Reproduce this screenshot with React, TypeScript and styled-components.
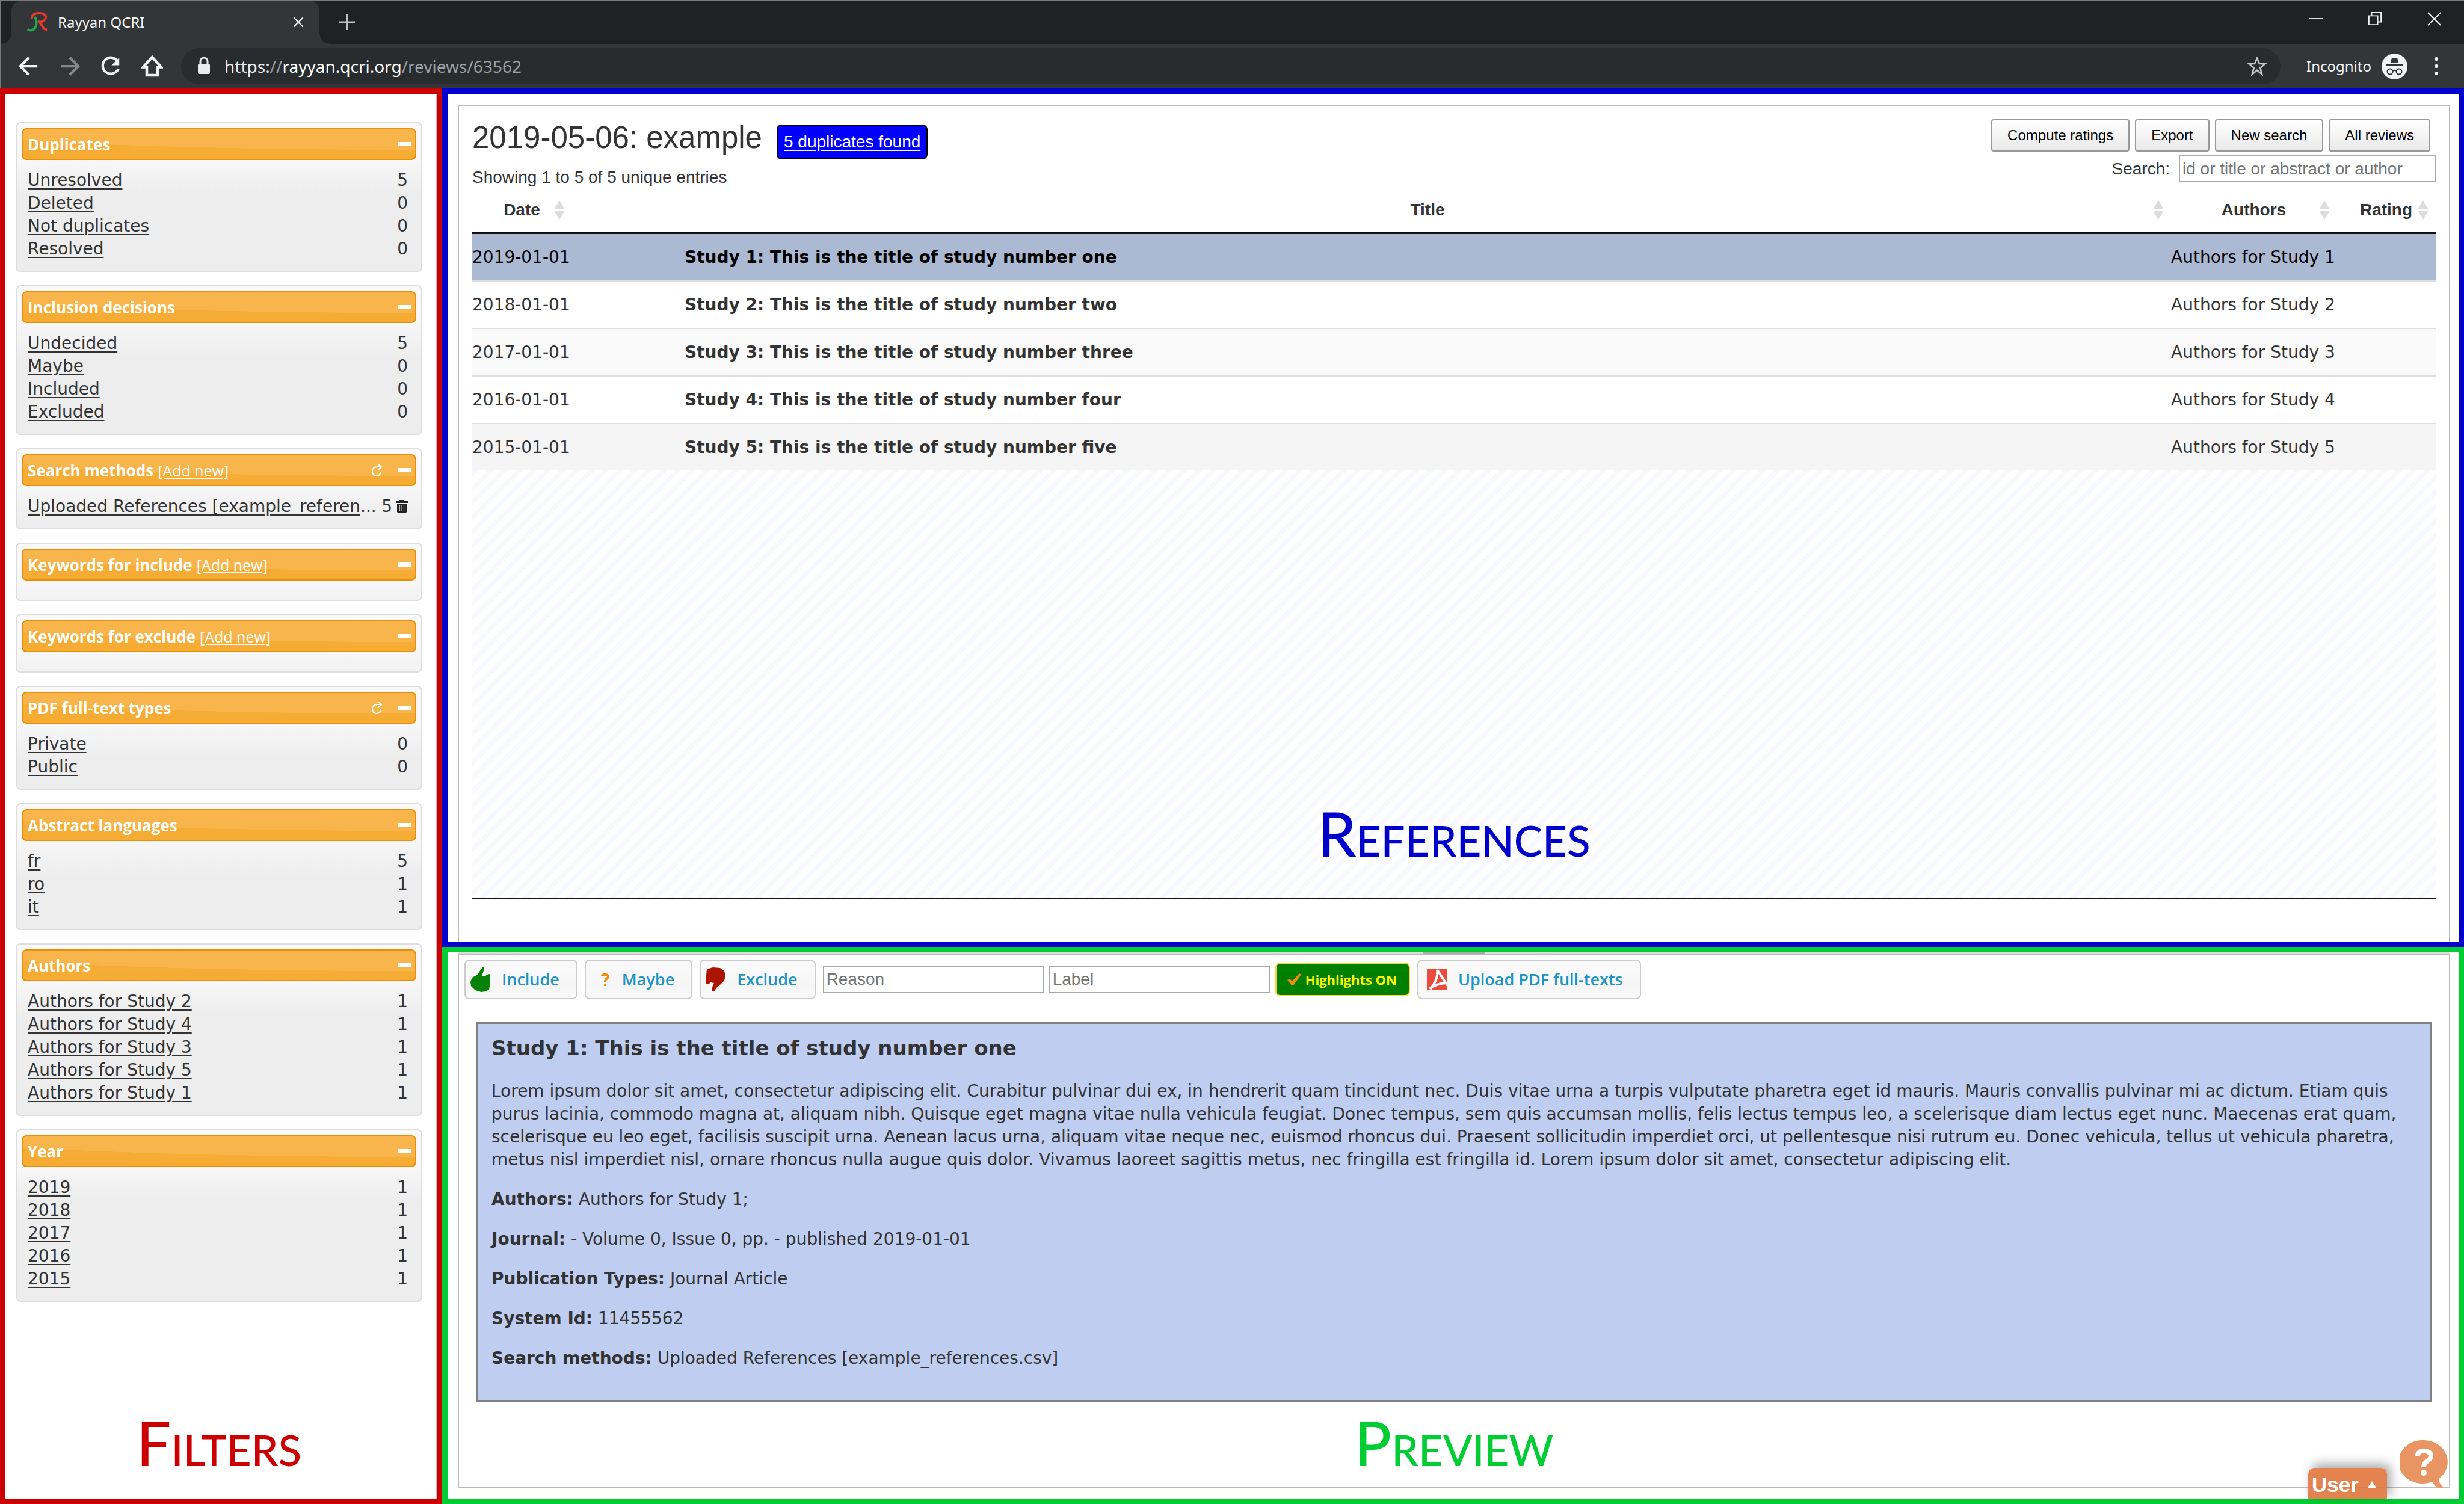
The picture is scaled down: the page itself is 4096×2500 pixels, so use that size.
import React from "react";
import styled, { createGlobalStyle, css } from "styled-components";

const verdana = '"DejaVu Sans", Verdana, sans-serif';
const arial = '"Liberation Sans", Arial, sans-serif';
const segoe = '"Noto Sans", "Segoe UI", sans-serif';
const trebuchet = '"Open Sans", "Trebuchet MS", sans-serif';

const GlobalStyle = createGlobalStyle`
  *, *::before, *::after { box-sizing: border-box; }
  body { margin: 0; background: #fff; color: #333; font: 28px/38px ${verdana}; }
  h1, h2, h3, p, ul { margin: 0; padding: 0; }
  ul { list-style: none; }
  button { margin: 0; cursor: pointer; }
  svg { display: block; flex: none; }
`;

const Page = styled.div`
  display: flex;
  flex-direction: column;
  min-height: 100vh;
`;

/* ---------- browser window ---------- */

const Chrome = styled.header`
  flex: none;
  font-family: ${segoe};
  color: #f1f3f4;
  border-top: 1px solid #77797b;
  border-left: 1px solid #77797b;
`;

const TabStrip = styled.div`
  display: flex;
  align-items: stretch;
  height: 72px;
  padding-left: 18px;
  background: #202124;
`;

const Tab = styled.div`
  position: relative;
  display: flex;
  align-items: center;
  width: 512px;
  padding: 0 26px;
  border-radius: 17px 17px 0 0;
  background: #323639;
  font-size: 24px;
  line-height: 34px;

  &::before, &::after {
    content: "";
    position: absolute;
    bottom: 0;
    width: 17px;
    height: 17px;
  }
  &::before {
    right: 100%;
    background: radial-gradient(circle at 0 0, transparent 16px, #323639 17px);
  }
  &::after {
    left: 100%;
    background: radial-gradient(circle at 100% 0, transparent 16px, #323639 17px);
  }
`;

const TabTitle = styled.span`
  flex: 1;
  padding-left: 17px;
`;

const IconButton = styled.button<{ $dim?: boolean }>`
  display: flex;
  align-items: center;
  justify-content: center;
  padding: 0;
  border: 0;
  background: none;
  color: ${(p) => (p.$dim ? "#85888a" : "inherit")};
`;

const NewTab = styled(IconButton)`
  width: 50px;
  margin-left: 21px;
  color: #bdc1c6;
`;

const WindowControls = styled.div`
  display: flex;
  align-items: center;
  gap: 76px;
  height: 60px;
  margin-left: auto;
  padding-right: 38px;
`;

const Toolbar = styled.div`
  display: flex;
  align-items: center;
  height: 74px;
  padding: 0 38px 0 30px;
  background: #323639;
`;

const NavButtons = styled.div`
  display: flex;
  gap: 34px;
  width: 270px;
`;

const Omnibox = styled.div`
  display: flex;
  flex: 1;
  align-items: center;
  height: 60px;
  padding: 0 23px 0 28px;
  border-radius: 30px;
  background: #282c2f;
  font-size: 28px;
  line-height: 40px;
`;

const Url = styled.span`
  flex: 1;
  padding-left: 24px;
  color: #9aa0a6;

  b { font-weight: 400; color: #fff; }
  i { font-style: normal; color: #e8eaed; }
`;

const Profile = styled.div`
  display: flex;
  align-items: center;
  gap: 17px;
  padding: 0 40px 0 43px;
  font-size: 24px;
  line-height: 34px;
`;

/* ---------- page frame ---------- */

const Workspace = styled.main`
  display: grid;
  flex: 1;
  grid-template-columns: 735px minmax(0, 1fr);
  grid-template-rows: minmax(0, 1427fr) minmax(0, 926fr);
`;

const Annotation = styled.div<{ $color: string }>`
  color: ${(p) => p.$color};
  font: 500 102px/100px Lato, sans-serif;
  font-variant: small-caps;
  text-align: center;
`;

/* ---------- filters ---------- */

const Sidebar = styled.aside`
  display: flex;
  flex-direction: column;
  grid-row: 1 / 3;
  gap: 22px;
  padding: 47px 24px 43px 17px;
  border: 9px solid #c00;
  box-shadow: inset -2px 0 #bbb;

  ${Annotation} { margin-top: auto; }
`;

const Panel = styled.section`
  padding: 8px;
  border: 2px solid #ddd;
  border-radius: 8px;
  background: linear-gradient(#f9f9f9 0, #f7f7f7 60px, #ededed 120px);
`;

const PanelHeader = styled.div`
  display: flex;
  align-items: center;
  height: 53px;
  padding: 0 7px 0 8px;
  border: 2px solid #e78f08;
  border-radius: 8px;
  background: radial-gradient(ellipse 130% 90% at 100% -20%, #f7b54c 99%, transparent 100%),
    linear-gradient(#f6af3b, #f6ab32);
  color: #fff;
  font-family: ${trebuchet};
`;

const PanelTitle = styled.h3`
  font-size: 26px;
  font-weight: 700;
  line-height: 40px;
`;

const HeaderLink = styled.a`
  margin-left: 7px;
  color: #fff;
  font-size: 25px;
  line-height: 40px;
`;

const HeaderTools = styled.div`
  display: flex;
  align-items: center;
  gap: 25px;
  margin-left: auto;
`;

const FilterList = styled.ul`
  padding: 15px 14px 9px 10px;
`;

const FilterRow = styled.li`
  display: flex;
  align-items: center;
  height: 38px;
  white-space: nowrap;
`;

const FilterLink = styled.a`
  color: #333;
  text-underline-offset: 4px;
`;

const Count = styled.span`
  margin-left: auto;
`;

const TrashButton = styled(IconButton)`
  margin-left: 6px;
  color: #222;
`;

/* ---------- references ---------- */

const References = styled.section`
  display: flex;
  flex-direction: column;
  padding: 19px 14px 0 17px;
  border: 9px solid #00c;
  border-bottom-width: 8px;
`;

const ReferencesFrame = styled.div`
  display: flex;
  flex: 1;
  flex-direction: column;
  padding: 21px 22px 71px 22px;
  border: 2px solid #bbb;
  border-bottom: 0;
`;

const ReviewBar = styled.div`
  display: flex;
  justify-content: space-between;
  font-family: ${arial};
`;

const TitleRow = styled.div`
  display: flex;
  align-items: flex-end;
  gap: 24px;
  height: 67px;
  margin-bottom: 13px;
`;

const ReviewTitle = styled.h1`
  align-self: flex-start;
  font-size: 51px;
  font-weight: 400;
  line-height: 62px;
`;

const DuplicatesBadge = styled.a`
  height: 58px;
  padding: 0 10px;
  border: 2px solid #000;
  border-radius: 8px;
  background: #00f;
  color: #fff;
  line-height: 54px;
  text-underline-offset: 4px;
`;

const Summary = styled.p`
  line-height: 34px;
`;

const Actions = styled.div`
  display: flex;
  flex-direction: column;
  align-items: flex-end;
  gap: 6px;
`;

const ButtonRow = styled.div`
  display: flex;
  gap: 9px;
  padding-right: 9px;
`;

const ActionButton = styled.button`
  height: 54px;
  padding: 0 25px;
  border: 2px solid #999;
  border-radius: 4px;
  background: linear-gradient(#fff, #e9e9e9);
  color: #000;
  font: 24px/34px ${arial};
`;

const SearchField = styled.label`
  display: flex;
  align-items: center;
  gap: 15px;
`;

const TextInput = styled.input<{ $width: number }>`
  width: ${(p) => p.$width}px;
  height: 45px;
  padding: 0 4px;
  border: 2px solid #a9a9a9;
  border-radius: 0;
  background: #fff;
  color: #333;
  font: 28px/36px ${arial};

  &::placeholder { color: #757575; opacity: 1; }
`;

const StudyTable = styled.table`
  width: 100%;
  border-spacing: 0;
  table-layout: fixed;
`;

const HeadCell = styled.th<{ $width?: number }>`
  width: ${(p) => (p.$width ? `${p.$width}px` : "auto")};
  height: 77px;
  padding: 0;
  border-bottom: 3px solid #111;
  font: 700 28px/34px ${arial};
`;

const SortButton = styled.button`
  display: flex;
  align-items: center;
  width: 100%;
  padding: 0 12px 0 29px;
  border: 0;
  background: none;
  color: inherit;
  font: inherit;

  span { flex: 1; }
`;

const StudyRow = styled.tr<{ $tone: string; $selected?: boolean }>`
  background: ${(p) => p.$tone};
  color: ${(p) => (p.$selected ? "#000" : "#333")};

  td {
    height: 79px;
    padding: 0;
    border-top: 2px solid #ddd;
    white-space: nowrap;
  }
  ${(p) =>
    p.$selected &&
    css`
      td { height: 77px; border-top: 0; }
    `}
`;

const StudyTitle = styled.td`
  font-weight: 700;
`;

const Scroller = styled.div`
  display: flex;
  flex: 1;
  align-items: flex-end;
  justify-content: center;
  padding-bottom: 58px;
  border-bottom: 2px solid #111;
  background: repeating-linear-gradient(135deg, #f8f9ff 0, #f8f9ff 8px, #fff 8px, #fff 17px);
`;

/* ---------- preview ---------- */

const Preview = styled.section`
  position: relative;
  display: flex;
  flex-direction: column;
  padding: 0 14px 18px 17px;
  border: 9px solid #00cd33;
`;

const Resizer = styled.div`
  height: 2px;
  background: #ddd;

  &::before {
    content: "";
    display: block;
    width: 104px;
    height: 2px;
    margin: 0 auto;
    background: #aaa;
  }
`;

const PreviewFrame = styled.div`
  display: flex;
  flex: 1;
  flex-direction: column;
  justify-content: space-between;
  padding: 8px 28px 23px;
  border: 2px solid #bbb;
`;

const DecisionBar = styled.div`
  display: flex;
  align-items: center;
  gap: 12px;
  margin: 0 0 37px -19px;
`;

const Fields = styled.div`
  display: flex;
  align-items: center;
  gap: 8px;
`;

const DecisionButton = styled.button<{ $inset?: boolean }>`
  display: flex;
  align-items: center;
  gap: 18px;
  height: 66px;
  padding: 0 28px 0 ${(p) => (p.$inset ? "14px" : "8px")};
  border: 2px solid #ccc;
  border-radius: 8px;
  background: linear-gradient(#fafafa, #f6f6f6 70%, #fafafa);
  color: #1c94c4;
  font: 600 27px/36px ${trebuchet};
`;

const HighlightButton = styled.button`
  display: flex;
  align-items: center;
  gap: 7px;
  height: 56px;
  padding: 0 20px 0 18px;
  border: 2px solid #fed22f;
  border-radius: 8px;
  background: green;
  color: #ff0;
  font: 700 22px/32px ${trebuchet};
`;

const Article = styled.article`
  padding: 18px 22px 50px;
  border: 4px solid #808080;
  background: #becdf0;
`;

const ArticleTitle = styled.h2`
  margin-bottom: 31px;
  font-size: 34px;
  font-weight: 700;
  line-height: 44px;
`;

const Paragraph = styled.p`
  & + & { margin-top: 28px; }
`;

const UserTab = styled.button`
  position: absolute;
  right: 119px;
  bottom: 0;
  display: flex;
  align-items: center;
  justify-content: space-between;
  width: 131px;
  height: 51px;
  padding: 4px 17px 0 6px;
  border: 0;
  border-radius: 10px 10px 0 0;
  background: rgba(224, 117, 60, 0.9);
  box-shadow: 6px -6px 18px rgba(0, 0, 0, 0.35);
  color: #fff;
  font: 700 35px/42px ${arial};
`;

const HelpBubble = styled.button`
  position: absolute;
  right: 18px;
  bottom: 17px;
  padding: 0;
  border: 0;
  background: none;
`;

/* ---------- icons ---------- */

type StrokeProps = { size: number; width: number; children: React.ReactNode };

const Stroke = ({ size, width, children }: StrokeProps) => (
  <svg width={size} height={size} viewBox="0 0 24 24" fill="none" stroke="currentColor" strokeWidth={width} aria-hidden>
    {children}
  </svg>
);

const Favicon = () => (
  <svg width="34" height="34" viewBox="0 0 34 34" fill="none" strokeWidth="4" aria-hidden>
    <path d="M8 11C7 4 14 2 20 2c10 0 13 5 10 10-2 4-7 5-11 4 6 2 6 14 14 13" stroke="#e8382b" />
    <path d="M13 8c4 6 3 16-1 20-3 3-8 3-11 1" stroke="#1fa84a" />
  </svg>
);

const SortIcon = () => (
  <svg width="18" height="32" viewBox="0 0 18 32" fill="#dcdcdc" aria-hidden>
    <path d="M9 0l9 15H0zM9 32l9-15H0z" />
  </svg>
);

const MinusIcon = () => (
  <svg width="22" height="7" viewBox="0 0 22 7" fill="#fff" aria-hidden>
    <path d="M0 0h22v7H0z" />
  </svg>
);

const RefreshIcon = () => (
  <svg width="18" height="20" viewBox="0 0 18 20" fill="none" stroke="#fff" strokeWidth="2" aria-hidden>
    <path d="M9 4C4 4 1 7 1 11.500S4 19 8 19s7-3 7-7M8 4h8M11 0l5 4-5 5" />
  </svg>
);

const TrashIcon = () => (
  <svg width="20" height="22" viewBox="0 0 20 22" aria-hidden>
    <path d="M6 0h8v2h6v3H0V2h6z" fill="currentColor" />
    <path d="M2 7h16v13l-2 2H4l-2-2z" fill="currentColor" />
    <path d="M6.500 9v10M10 9v10M13.500 9v10" stroke="#bbb" strokeWidth="1.200" />
  </svg>
);

const IncognitoIcon = () => (
  <svg width="43" height="43" viewBox="0 0 43 43" aria-hidden>
    <circle cx="21.500" cy="21.500" r="21.500" fill="#f1f3f4" />
    <path d="M15 15l2-8 4.500 1L26 7l2 8zM7 18h29v2.500H7z" fill="#323639" />
    <g fill="none" stroke="#323639" strokeWidth="2">
      <circle cx="14" cy="30" r="4.500" />
      <circle cx="29" cy="30" r="4.500" />
      <path d="M18.500 29c2-1.500 4-1.500 6 0" />
    </g>
  </svg>
);

const ThumbUp = () => (
  <svg width="34" height="42" viewBox="0 0 34 42" fill="#058205" aria-hidden>
    <path d="M21 0l2 3-4 13 6-1 5-3 3 1-1 7 1 5-2 13-6 3-7 1-10-3-7-7-1-7 3-7 9-5 5-8z" />
  </svg>
);

const ThumbDown = () => (
  <svg width="34" height="42" viewBox="0 0 34 42" fill="#ab1500" aria-hidden>
    <path d="M2 4l10-3 12 1 7 5 2 8-2 8-6 6-6 5-5 7h-4v-5l4-9-6-1-3 3-4-1V14z" />
  </svg>
);

const QuestionIcon = () => (
  <svg width="34" height="42" viewBox="0 0 34 42" fill="none" stroke="#ef8c08" strokeWidth="4" aria-hidden>
    <path d="M19 15c0-3 10-3 10 1 0 4-5 3-5 9M24 28v4" />
  </svg>
);

const CheckIcon = () => (
  <svg width="23" height="20" viewBox="0 0 23 20" fill="#ef8c08" aria-hidden>
    <path d="M0 11l4-2 4 4L20 0l3 2L10 20H7z" />
  </svg>
);

const PdfIcon = () => (
  <svg width="34" height="34" viewBox="0 0 34 34" aria-hidden>
    <path d="M0 0h34v34H0z" fill="#eb4b3c" />
    <path d="M17 1l17 26M17 1c2 12-3 22-11 32M4 32C12 27 24 23 34 23" fill="none" stroke="#fff" strokeWidth="4" />
  </svg>
);

const BubbleIcon = () => (
  <svg width="80" height="80" viewBox="0 0 80 80" aria-hidden>
    <path d="M40 0a40 36 0 0 1 25 64c0 6 3 10 8 14-7 4-14 0-19-9A40 36 0 1 1 40 0z" fill="#e99563" />
    <path d="M30 26c-1-11 22-11 22 0 0 9-12 8-12 19" fill="none" stroke="#fff" strokeWidth="8" />
    <circle cx="40" cy="54" r="5" fill="#fff" />
  </svg>
);

/* ---------- content ---------- */

type Filter = { label: string; count: number; cut?: boolean; removable?: boolean };
type FilterGroup = { title: string; addNew?: boolean; refresh?: boolean; items: Filter[] };

const filterGroups: FilterGroup[] = [
  {
    title: "Duplicates",
    items: [
      { label: "Unresolved", count: 5 },
      { label: "Deleted", count: 0 },
      { label: "Not duplicates", count: 0 },
      { label: "Resolved", count: 0 },
    ],
  },
  {
    title: "Inclusion decisions",
    items: [
      { label: "Undecided", count: 5 },
      { label: "Maybe", count: 0 },
      { label: "Included", count: 0 },
      { label: "Excluded", count: 0 },
    ],
  },
  {
    title: "Search methods",
    addNew: true,
    refresh: true,
    items: [{ label: "Uploaded References [example_referen", count: 5, cut: true, removable: true }],
  },
  { title: "Keywords for include", addNew: true, items: [] },
  { title: "Keywords for exclude", addNew: true, items: [] },
  {
    title: "PDF full-text types",
    refresh: true,
    items: [
      { label: "Private", count: 0 },
      { label: "Public", count: 0 },
    ],
  },
  {
    title: "Abstract languages",
    items: [
      { label: "fr", count: 5 },
      { label: "ro", count: 1 },
      { label: "it", count: 1 },
    ],
  },
  { title: "Authors", items: [2, 4, 3, 5, 1].map((n) => ({ label: `Authors for Study ${n}`, count: 1 })) },
  { title: "Year", items: [2019, 2018, 2017, 2016, 2015].map((y) => ({ label: String(y), count: 1 })) },
];

const studies = [
  { n: 1, date: "2019-01-01", word: "one", tone: "#abb9d3" },
  { n: 2, date: "2018-01-01", word: "two", tone: "#fff" },
  { n: 3, date: "2017-01-01", word: "three", tone: "#f9f9f9" },
  { n: 4, date: "2016-01-01", word: "four", tone: "#fff" },
  { n: 5, date: "2015-01-01", word: "five", tone: "#f5f5f5" },
];

const details = [
  ["Authors:", "Authors for Study 1;"],
  ["Journal:", "- Volume 0, Issue 0, pp. - published 2019-01-01"],
  ["Publication Types:", "Journal Article"],
  ["System Id:", "11455562"],
  ["Search methods:", "Uploaded References [example_references.csv]"],
];

const abstractText =
  "Lorem ipsum dolor sit amet, consectetur adipiscing elit. Curabitur pulvinar dui ex, in hendrerit quam tincidunt nec. Duis vitae urna a turpis vulputate pharetra eget id mauris. Mauris convallis pulvinar mi ac dictum. Etiam quis purus lacinia, commodo magna at, aliquam nibh. Quisque eget magna vitae nulla vehicula feugiat. Donec tempus, sem quis accumsan mollis, felis lectus tempus leo, a scelerisque diam lectus eget nunc. Maecenas erat quam, scelerisque eu leo eget, facilisis suscipit urna. Aenean lacus urna, aliquam vitae neque nec, euismod rhoncus dui. Praesent sollicitudin imperdiet orci, ut pellentesque nisi rutrum eu. Donec vehicula, tellus ut vehicula pharetra, metus nisl imperdiet nisl, ornare rhoncus nulla augue quis dolor. Vivamus laoreet sagittis metus, nec fringilla est fringilla id. Lorem ipsum dolor sit amet, consectetur adipiscing elit.";

/* ---------- components ---------- */

const BrowserChrome = () => (
  <Chrome>
    <TabStrip>
      <Tab>
        <Favicon />
        <TabTitle>Rayyan QCRI</TabTitle>
        <IconButton aria-label="Close tab">
          <Stroke size={18} width={3}><path d="M2 2l20 20M22 2L2 22" /></Stroke>
        </IconButton>
      </Tab>
      <NewTab aria-label="New tab">
        <Stroke size={26} width={3}><path d="M12 0v24M0 12h24" /></Stroke>
      </NewTab>
      <WindowControls>
        <IconButton aria-label="Minimize">
          <Stroke size={22} width={2}><path d="M0 12h24" /></Stroke>
        </IconButton>
        <IconButton aria-label="Restore">
          <Stroke size={22} width={2}><path d="M1 7h16v16H1zM6 7V1h17v17h-6" /></Stroke>
        </IconButton>
        <IconButton aria-label="Close">
          <Stroke size={23} width={2}><path d="M1 1l22 22M23 1L1 23" /></Stroke>
        </IconButton>
      </WindowControls>
    </TabStrip>
    <Toolbar>
      <NavButtons>
        <IconButton aria-label="Back">
          <Stroke size={34} width={3}><path d="M22 12H3M12 2L2 12l10 10" /></Stroke>
        </IconButton>
        <IconButton aria-label="Forward" $dim>
          <Stroke size={34} width={3}><path d="M2 12h19M12 2l10 10-10 10" /></Stroke>
        </IconButton>
        <IconButton aria-label="Reload">
          <Stroke size={34} width={3}>
            <path d="M20 6A9.500 9.500 0 1 0 21 15" />
            <path d="M22 2v9h-9z" fill="currentColor" stroke="none" />
          </Stroke>
        </IconButton>
        <IconButton aria-label="Home">
          <Stroke size={36} width={3}><path d="M12 2L2 13h4v9h12v-9h4z" /></Stroke>
        </IconButton>
      </NavButtons>
      <Omnibox>
        <svg width="20" height="34" viewBox="0 0 20 34" aria-hidden>
          <path d="M4 14V9c0-8 12-8 12 0v5" fill="none" stroke="#e8eaed" strokeWidth="3" />
          <rect y="13" width="20" height="17" rx="2" fill="#e8eaed" />
        </svg>
        <Url><i>https:</i>//<b>rayyan.qcri.org</b>/reviews/63562</Url>
        <IconButton aria-label="Bookmark this page">
          <Stroke size={32} width={2}>
            <path d="M12 2l3 7h7l-6 5 2 8-6-5-6 5 2-8-6-5h7z" stroke="#c4c7ca" />
          </Stroke>
        </IconButton>
      </Omnibox>
      <Profile>Incognito<IncognitoIcon /></Profile>
      <IconButton aria-label="Menu">
        <svg width="16" height="32" viewBox="0 0 16 32" fill="#f1f3f4" aria-hidden>
          <circle cx="8" cy="4" r="3" />
          <circle cx="8" cy="16" r="3" />
          <circle cx="8" cy="28" r="3" />
        </svg>
      </IconButton>
    </Toolbar>
  </Chrome>
);

const FilterPanel = ({ title, addNew, refresh, items }: FilterGroup) => (
  <Panel>
    <PanelHeader>
      <PanelTitle>{title}</PanelTitle>
      {addNew && <HeaderLink href="#">[Add new]</HeaderLink>}
      <HeaderTools>
        {refresh && <IconButton aria-label={`Refresh ${title}`}><RefreshIcon /></IconButton>}
        <IconButton aria-label={`Collapse ${title}`}><MinusIcon /></IconButton>
      </HeaderTools>
    </PanelHeader>
    <FilterList>
      {items.map((item) => (
        <FilterRow key={item.label}>
          <FilterLink href="#">{item.label}</FilterLink>
          {item.cut && "..."}
          <Count>{item.count}</Count>
          {item.removable && <TrashButton aria-label="Delete search"><TrashIcon /></TrashButton>}
        </FilterRow>
      ))}
    </FilterList>
  </Panel>
);

const SortHead = ({ label, width }: { label: string; width?: number }) => (
  <HeadCell scope="col" $width={width}>
    <SortButton><span>{label}</span><SortIcon /></SortButton>
  </HeadCell>
);

export default function App() {
  return (
    <Page>
      <GlobalStyle />
      <BrowserChrome />
      <Workspace>
        <Sidebar>
          {filterGroups.map((group) => <FilterPanel key={group.title} {...group} />)}
          <Annotation $color="#c00">Filters</Annotation>
        </Sidebar>

        <References>
          <ReferencesFrame>
            <ReviewBar>
              <div>
                <TitleRow>
                  <ReviewTitle>2019-05-06: example</ReviewTitle>
                  <DuplicatesBadge href="#">5 duplicates found</DuplicatesBadge>
                </TitleRow>
                <Summary>Showing 1 to 5 of 5 unique entries</Summary>
              </div>
              <Actions>
                <ButtonRow>
                  <ActionButton>Compute ratings</ActionButton>
                  <ActionButton>Export</ActionButton>
                  <ActionButton>New search</ActionButton>
                  <ActionButton>All reviews</ActionButton>
                </ButtonRow>
                <SearchField>
                  Search:
                  <TextInput $width={427} placeholder="id or title or abstract or author" />
                </SearchField>
              </Actions>
            </ReviewBar>
            <StudyTable>
              <thead>
                <tr>
                  <SortHead label="Date" width={166} />
                  <HeadCell $width={187} />
                  <SortHead label="Title" />
                  <SortHead label="Authors" width={276} />
                  <SortHead label="Rating" width={164} />
                </tr>
              </thead>
              <tbody>
                {studies.map((s) => (
                  <StudyRow key={s.n} $tone={s.tone} $selected={s.n === 1}>
                    <td>{s.date}</td>
                    <td />
                    <StudyTitle>Study {s.n}: This is the title of study number {s.word}</StudyTitle>
                    <td>Authors for Study {s.n}</td>
                    <td />
                  </StudyRow>
                ))}
              </tbody>
            </StudyTable>
            <Scroller>
              <Annotation $color="#00c">References</Annotation>
            </Scroller>
          </ReferencesFrame>
        </References>

        <Preview>
          <Resizer />
          <PreviewFrame>
            <div>
              <DecisionBar>
                <DecisionButton><ThumbUp />Include</DecisionButton>
                <DecisionButton><QuestionIcon />Maybe</DecisionButton>
                <DecisionButton><ThumbDown />Exclude</DecisionButton>
                <Fields>
                  <TextInput $width={368} aria-label="Reason" placeholder="Reason" />
                  <TextInput $width={368} aria-label="Label" placeholder="Label" />
                  <HighlightButton><CheckIcon />Highlights ON</HighlightButton>
                </Fields>
                <DecisionButton $inset><PdfIcon />Upload PDF full-texts</DecisionButton>
              </DecisionBar>
              <Article>
                <ArticleTitle>Study 1: This is the title of study number one</ArticleTitle>
                <Paragraph>{abstractText}</Paragraph>
                {details.map(([name, value]) => (
                  <Paragraph key={name}><b>{name}</b> {value}</Paragraph>
                ))}
              </Article>
            </div>
            <Annotation $color="#00cd33">Preview</Annotation>
          </PreviewFrame>
          <UserTab>
            User
            <svg width="16" height="12" viewBox="0 0 16 12" fill="#fff" aria-hidden><path d="M8 0l8 12H0z" /></svg>
          </UserTab>
          <HelpBubble aria-label="Help"><BubbleIcon /></HelpBubble>
        </Preview>
      </Workspace>
    </Page>
  );
}
